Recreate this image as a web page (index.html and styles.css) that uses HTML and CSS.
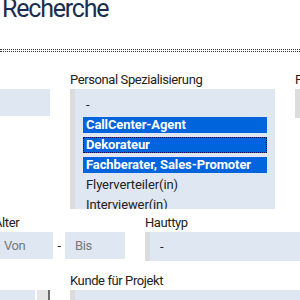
FILE: index.html
```html
<!DOCTYPE html>
<html lang="de">
<head>
    <meta charset="UTF-8">
    <meta name="viewport" content="width=device-width, initial-scale=1.0">
    <title>Recherche</title>
    <link rel="stylesheet" href="styles.css">
</head>
<body>
    <div class="page">
        <h1 class="title">Recherche</h1>
        <div class="rule"></div>

        <!-- Suchformular -->
        <form class="search">
            <div class="row row-top">
                <div class="field col-wide">
                    <label class="lbl">Name</label>
                    <div class="input"></div>
                </div>
                <div class="field col-wide">
                    <label class="lbl">Personal Spezialisierung</label>
                    <div class="multi">
                        <div class="opt">-</div>
                        <div class="opt sel">CallCenter-Agent</div>
                        <div class="opt sel focus">Dekorateur</div>
                        <div class="opt sel">Fachberater, Sales-Promoter</div>
                        <div class="opt">Flyerverteiler(in)</div>
                        <div class="opt">Interviewer(in)</div>
                    </div>
                </div>
                <div class="field col-wide">
                    <label class="lbl">Personal Merkmale</label>
                    <div class="select">-</div>
                </div>
            </div>

            <div class="row row-mid">
                <div class="field col-small">
                    <label class="lbl">Geschlecht</label>
                    <div class="select">-</div>
                </div>
                <div class="field col-age">
                    <label class="lbl">Alter</label>
                    <div class="range">
                        <div class="input from">Von</div>
                        <span class="dash">-</span>
                        <div class="input to">Bis</div>
                    </div>
                </div>
                <div class="field col-wide">
                    <label class="lbl">Hauttyp</label>
                    <div class="select">-</div>
                </div>
            </div>

            <div class="row">
                <div class="field col-wide">
                    <label class="lbl">Ort</label>
                    <div class="combo">
                        <div class="input grow"></div>
                        <div class="pick"></div>
                    </div>
                </div>
                <div class="field col-long">
                    <label class="lbl">Kunde für Projekt</label>
                    <div class="select"></div>
                </div>
            </div>
        </form>
    </div>
</body>
</html>
```

FILE: styles.css
```css
body {
    margin: 0;
    overflow: hidden;
    font-family: Roboto, "Open Sans", sans-serif;
    color: #222;
    background: #fff;
}
.page {
    width: 300px;
}
.title {
    margin: -6px 0 26px 0;
    padding-left: 2px;
    font-size: 25px;
    line-height: 29px;
    font-weight: 400;
    letter-spacing: -1.2px;
    color: #1b2d4f;
}
.rule {
    height: 1px;
    border-top: 1px dotted #333;
    border-bottom: 1px dotted #333;
}
.search {
    margin: 20px 0 0 -155px;
    font-size: 13px;
    letter-spacing: -0.4px;
}
.row {
    display: flex;
    gap: 20px;
}
.row-top {
    margin-bottom: 6px;
}
.row-mid {
    margin-bottom: 12px;
}
.field {
    flex: none;
}
.col-wide { width: 205px; }
.col-small { width: 129px; }
.col-age { width: 131px; }
.col-long { width: 430px; }

.lbl {
    display: block;
    height: 16px;
    line-height: 16px;
    margin-bottom: 1px;
    white-space: nowrap;
}
.input {
    box-sizing: border-box;
    height: 27px;
    line-height: 27px;
    padding: 0 10px;
    background: #dfe7f2;
    color: #777;
}
.select {
    box-sizing: border-box;
    height: 29px;
    line-height: 29px;
    padding-left: 10px;
    border-left: 5px solid #dcdcdc;
    background: #dfe7f2;
}
.multi {
    box-sizing: border-box;
    height: 120px;
    overflow: hidden;
    padding: 8px 8px 0 8px;
    border-left: 5px solid #dcdcdc;
    background: #dfe7f2;
    letter-spacing: -0.1px;
}
.opt {
    height: 16px;
    line-height: 16px;
    padding-left: 3px;
    margin-bottom: 4px;
    white-space: nowrap;
}
.opt.sel {
    background: #0064dc;
    color: #fff;
    font-weight: 700;
}
.opt.focus {
    outline: 1px dotted #0b0b5c;
    outline-offset: -1px;
}
.range {
    display: flex;
    align-items: center;
}
.range .from { width: 59px; }
.range .to { width: 60px; }
.dash {
    width: 12px;
    text-align: center;
}
.combo {
    display: flex;
    gap: 2px;
}
.combo .grow {
    flex: 1;
}
.pick {
    width: 11px;
    height: 27px;
    background: #e6e6e6;
    border-right: 2px solid #6b6b6b;
}
```
